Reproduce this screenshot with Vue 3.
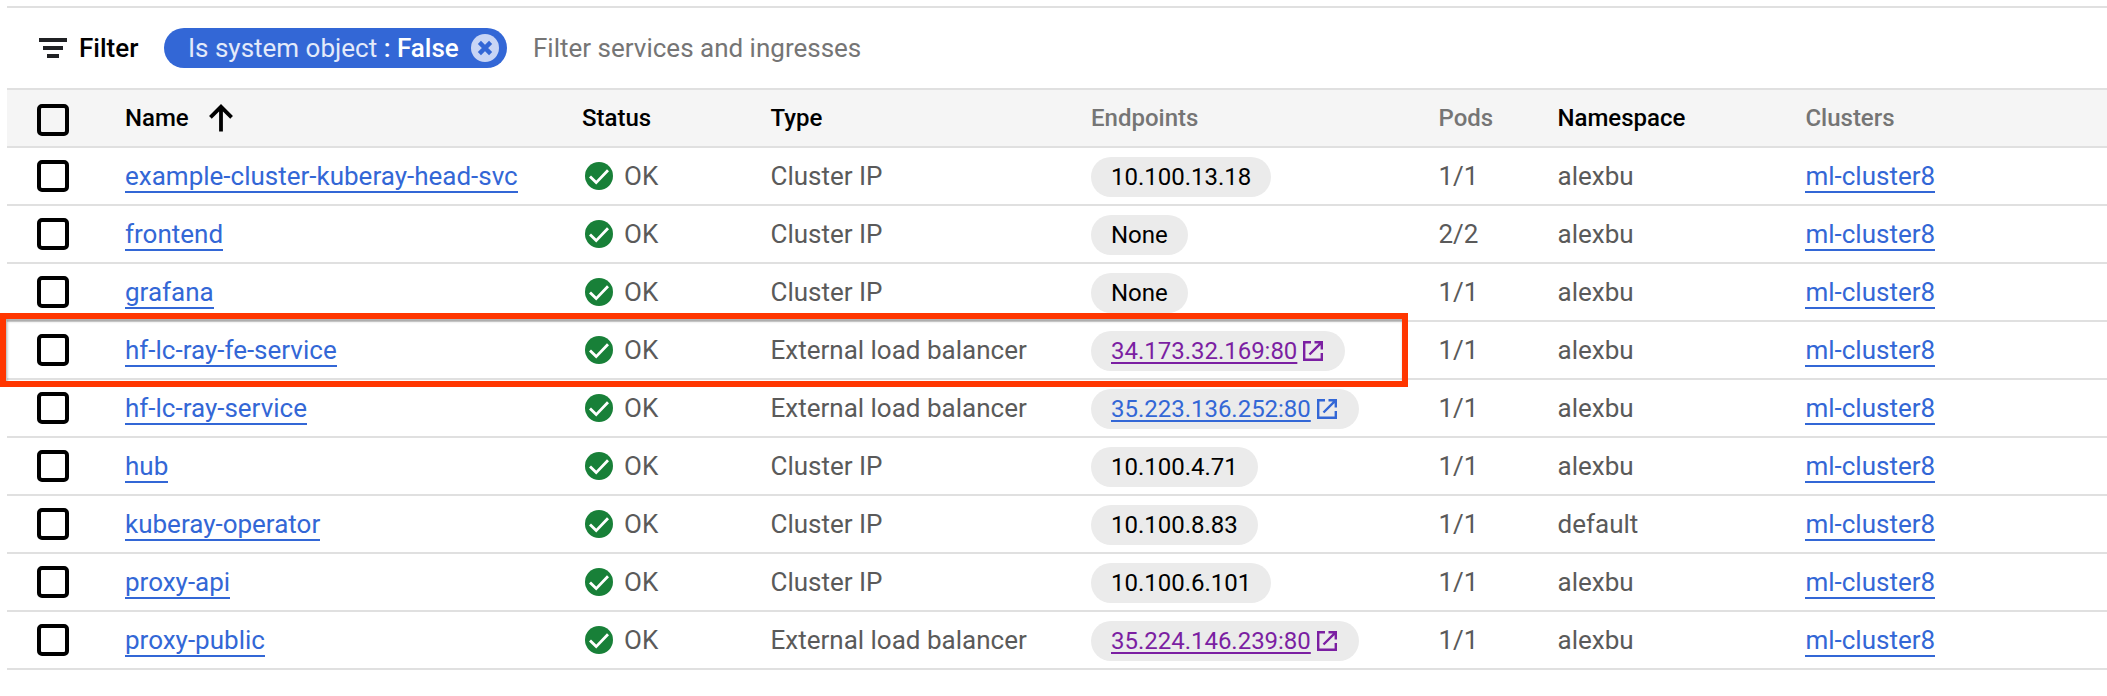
<script setup>
const columns = [
  { label: 'Name', sorted: true },
  { label: 'Status' },
  { label: 'Type' },
  { label: 'Endpoints', muted: true },
  { label: 'Pods', muted: true },
  { label: 'Namespace' },
  { label: 'Clusters', muted: true },
]

const ip = 'Cluster IP'
const lb = 'External load balancer'
const rows = [
  { name: 'example-cluster-kuberay-head-svc', type: ip, endpoint: '10.100.13.18', pods: '1/1', ns: 'alexbu' },
  { name: 'frontend', type: ip, endpoint: 'None', pods: '2/2', ns: 'alexbu' },
  { name: 'grafana', type: ip, endpoint: 'None', pods: '1/1', ns: 'alexbu' },
  { name: 'hf-lc-ray-fe-service', type: lb, endpoint: '34.173.32.169:80', link: 'visited', pods: '1/1', ns: 'alexbu', marked: true },
  { name: 'hf-lc-ray-service', type: lb, endpoint: '35.223.136.252:80', link: 'fresh', pods: '1/1', ns: 'alexbu' },
  { name: 'hub', type: ip, endpoint: '10.100.4.71', pods: '1/1', ns: 'alexbu' },
  { name: 'kuberay-operator', type: ip, endpoint: '10.100.8.83', pods: '1/1', ns: 'default' },
  { name: 'proxy-api', type: ip, endpoint: '10.100.6.101', pods: '1/1', ns: 'alexbu' },
  { name: 'proxy-public', type: lb, endpoint: '35.224.146.239:80', link: 'visited', pods: '1/1', ns: 'alexbu' },
]
</script>

<template>
  <main class="page">
    <div class="filter-bar">
      <svg class="filter-icon" width="28" height="20" viewBox="0 0 28 20">
        <path d="M0 0h28v4H0zM4 8h20v4H4zM8 16h12v4H8z" fill="#202124" />
      </svg>
      <span class="filter-label">Filter</span>
      <span class="pill">
        <span class="pill-text">Is system object <b>: False</b></span>
        <svg width="28" height="28" viewBox="0 0 28 28">
          <circle cx="14" cy="14" r="14" fill="#c8d5f5" />
          <path d="M8.4 8.4l11.2 11.2M19.6 8.4L8.4 19.6" stroke="#3367d6" stroke-width="4.4" />
        </svg>
      </span>
      <span class="placeholder">Filter services and ingresses</span>
    </div>

    <div class="row head">
      <span class="check"></span>
      <span v-for="c in columns" :key="c.label" class="th" :class="{ muted: c.muted }">
        {{ c.label }}
        <svg v-if="c.sorted" class="arrow" width="24" height="28" viewBox="0 0 24 28">
          <path d="M12 27.5V3M1.4 13.4L12 2.8l10.6 10.6" fill="none" stroke="#000" stroke-width="3.8" />
        </svg>
      </span>
    </div>

    <div v-for="r in rows" :key="r.name" class="row">
      <span class="check"></span>
      <span><a class="link">{{ r.name }}</a></span>
      <span class="status">
        <svg width="28" height="28" viewBox="0 0 28 28">
          <circle cx="14" cy="14" r="14" fill="#188038" />
          <path d="M5 14.4l6.2 6.2L23 8.2" fill="none" stroke="#fff" stroke-width="2.8" />
        </svg>
        OK
      </span>
      <span>{{ r.type }}</span>
      <span>
        <span class="chip" :class="r.link">
          <span class="chip-text">{{ r.endpoint }}</span>
          <svg v-if="r.link" width="24" height="24" viewBox="0 0 24 24">
            <path d="M10 3.2H3.2v17.6h17.6V14M13.5 3.2h7.3v7.3M20.6 3.4L8.5 15.5" fill="none" stroke="currentColor" stroke-width="2.4" />
          </svg>
        </span>
      </span>
      <span>{{ r.pods }}</span>
      <span>{{ r.ns }}</span>
      <span><a class="link">ml-cluster8</a></span>
      <i v-if="r.marked" class="marker"></i>
    </div>
  </main>
</template>

<style>
body {
  margin: 0;
  background: #fff;
}
</style>

<style scoped>
.page {
  box-sizing: border-box;
  height: 696px;
  padding: 6px 0 0 7px;
  overflow: hidden;
  font: 26px/32px Roboto, "Liberation Sans", sans-serif;
  color: #5a5a5a;
  white-space: nowrap;
}
svg {
  display: block;
  flex: none;
}
.filter-bar {
  display: flex;
  align-items: center;
  height: 80px;
  padding-left: 32px;
  border-top: 2px solid #e0e0e0;
  border-bottom: 2px solid #e0e0e0;
}
.filter-label {
  width: 85px;
  margin-left: 12px;
  font-weight: 500;
  color: #000;
}
.pill {
  box-sizing: border-box;
  display: flex;
  align-items: center;
  justify-content: space-between;
  width: 343px;
  height: 40px;
  padding: 0 8px 0 24px;
  border-radius: 20px;
  background: #3367d6;
  color: #e3eafa;
}
.pill b {
  font-weight: 500;
  color: #fff;
}
.placeholder {
  margin-left: 26px;
  color: #757575;
}
.row {
  position: relative;
  display: grid;
  grid-template-columns: 88px 457px 188.5px 320.5px 347.5px 119px 247.9px 1fr;
  align-items: center;
  height: 56px;
  padding-left: 30px;
  border-bottom: 2px solid #e0e0e0;
}
.head {
  background: #f5f5f5;
  font-size: 24px;
  font-weight: 500;
  color: #000;
}
.head .check {
  margin-top: 4px;
}
.th {
  display: flex;
  align-items: center;
}
.muted {
  color: #757575;
}
.arrow {
  margin-left: 20px;
}
.check {
  box-sizing: border-box;
  width: 32px;
  height: 32px;
  border: 4px solid #000;
  border-radius: 5px;
}
.link {
  display: inline-block;
  height: 31px;
  margin-bottom: -1px;
  border-bottom: 2px solid #3367d6;
  color: #3367d6;
}
.status {
  display: flex;
  align-items: center;
  gap: 11px;
  padding-left: 3px;
}
.chip {
  display: inline-flex;
  align-items: center;
  height: 40px;
  margin-top: 2px;
  padding: 0 20px;
  border-radius: 20px;
  background: #ebebeb;
  font-size: 24px;
  letter-spacing: -0.02px;
  color: #000;
  vertical-align: top;
}
.chip svg {
  margin-left: 4px;
}
.visited {
  color: #7b1fa2;
}
.fresh {
  color: #3367d6;
}
.visited .chip-text,
.fresh .chip-text {
  text-decoration: underline;
  text-decoration-thickness: 2px;
  text-underline-offset: 3px;
}
.marker {
  position: absolute;
  z-index: 1;
  box-sizing: border-box;
  top: -9px;
  left: -7px;
  width: 1408px;
  height: 74px;
  border: 6px solid #ff3600;
  box-shadow: inset 1px 2px 3px rgba(0, 0, 0, 0.35);
}
</style>
